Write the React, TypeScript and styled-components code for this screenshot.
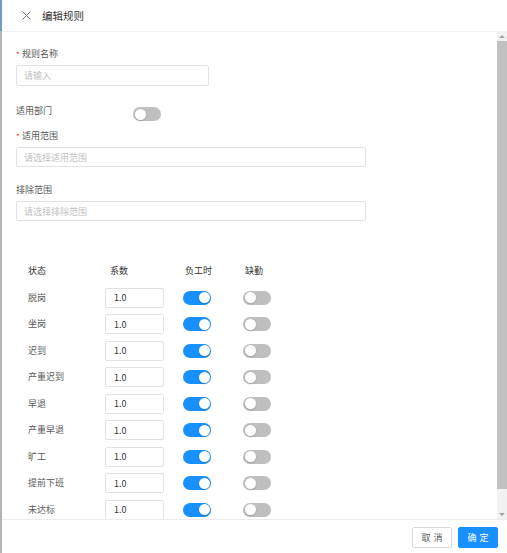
import React from 'react'
import styled, { createGlobalStyle } from 'styled-components';

const GlobalStyle = createGlobalStyle`
  html, body {
    margin: 0;
    padding: 0;
    background: #fff;
  }
  body {
    font-family: "Noto Sans CJK SC", "Noto Sans", sans-serif;
    color: #595959;
  }
  * { box-sizing: border-box; }
`;

const Page = styled.div`
  display: flex;
  width: 507px;
  height: 553px;
  overflow: hidden;
`;

const LeftEdge = styled.div`
  width: 2px;
  flex: none;
  background: linear-gradient(#6f9bc6 0 31px, #b4b4b4 31px);
`;

const Drawer = styled.div`
  flex: 1;
  display: flex;
  flex-direction: column;
  min-width: 0;
`;

const Header = styled.div`
  height: 32px;
  flex: none;
  display: flex;
  align-items: center;
  padding-left: 19px;
  border-bottom: 1px solid #f0f0f0;
`;

const CloseButton = styled.button`
  width: 10px;
  height: 10px;
  padding: 0;
  border: 0;
  background: none;
  display: flex;
  align-items: center;
  justify-content: center;
  margin-right: 11px;
  cursor: pointer;
`;

const Title = styled.div`
  font-size: 10.5px;
  line-height: 14px;
  color: #333;
`;

const BodyRow = styled.div`
  flex: 1;
  min-height: 0;
  display: flex;
`;

const Content = styled.div`
  flex: 1;
  overflow: hidden;
  padding: 16px 0 0 14px;
`;

const ScrollTrack = styled.div`
  width: 10px;
  flex: none;
  display: flex;
  flex-direction: column;
  background: #f1f1f1;
`;

const ScrollArrow = styled.div<{ $down?: boolean }>`
  height: 9px;
  flex: none;
  display: flex;
  align-items: center;
  justify-content: center;

  &::after {
    content: '';
    width: 0;
    height: 0;
    border-left: 3px solid transparent;
    border-right: 3px solid transparent;
    ${p => (p.$down ? 'border-top' : 'border-bottom')}: 3px solid #a3a3a3;
  }
`;

const ScrollThumb = styled.div<{ $size: number }>`
  height: ${p => p.$size}px;
  flex: none;
  background: #c1c1c1;
`;

const ScrollRest = styled.div`
  flex: 1;
`;

const Label = styled.div<{ $required?: boolean; $gap?: number }>`
  font-size: 9px;
  line-height: 12px;
  color: #595959;
  margin-top: ${p => p.$gap ?? 0}px;
  position: relative;
  padding-left: ${p => (p.$required ? 6 : 0)}px;

  &::before {
    content: ${p => (p.$required ? '"*"' : 'none')};
    position: absolute;
    left: 0;
    top: 1px;
    color: #f5222d;
    font-size: 8px;
  }
`;

const TextInput = styled.input<{ $width: number; $height?: number }>`
  display: block;
  width: ${p => p.$width}px;
  height: ${p => p.$height ?? 20}px;
  margin-top: 5px;
  border: 1px solid #e3e3e3;
  border-radius: 2px;
  padding: 0 7px;
  font-family: inherit;
  font-size: 9px;
  color: #333;
  outline: none;

  &::placeholder { color: #bfbfbf; }
`;

const DeptRow = styled.div`
  display: flex;
  align-items: flex-start;
  margin-top: 19px;
`;

const DeptLabel = styled(Label)`
  width: 117px;
`;

const Toggle = styled.button<{ $on?: boolean }>`
  width: 28px;
  height: 14px;
  padding: 0;
  border: 0;
  border-radius: 7px;
  background: ${p => (p.$on ? '#1890ff' : '#bfbfbf')};
  position: relative;
  cursor: pointer;
  flex: none;

  &::after {
    content: '';
    position: absolute;
    top: 1.5px;
    left: ${p => (p.$on ? 15.5 : 1.5)}px;
    width: 11px;
    height: 11px;
    border-radius: 50%;
    background: #fff;
    box-shadow: 0 1px 2px rgba(0, 35, 11, 0.2);
  }
`;

const DeptToggle = styled(Toggle)`
  margin-top: 2px;
`;

const Table = styled.div`
  display: grid;
  grid-template-columns: 77px 78px 60px 40px;
  grid-auto-rows: 26.5px;
  align-items: center;
  margin-top: 37px;
  padding-left: 12px;
`;

const HeadCell = styled.div<{ $indent?: number }>`
  font-size: 9px;
  line-height: 12px;
  color: #333;
  padding-left: ${p => p.$indent ?? 0}px;
`;

const StatusCell = styled.div`
  font-size: 9px;
  line-height: 12px;
  color: #595959;
`;

const CoefInput = styled(TextInput)`
  margin-top: 0;
  padding: 0 8px;
`;

const Footer = styled.div`
  height: 34px;
  flex: none;
  border-top: 1px solid #ececec;
  display: flex;
  justify-content: flex-end;
  align-items: center;
  gap: 6px;
  padding: 0 9px 0 0;
`;

const Button = styled.button<{ $primary?: boolean }>`
  width: 40px;
  height: 21px;
  padding: 0;
  border-radius: 2px;
  border: 1px solid ${p => (p.$primary ? '#1890ff' : '#d9d9d9')};
  background: ${p => (p.$primary ? '#1890ff' : '#fff')};
  color: ${p => (p.$primary ? '#fff' : '#595959')};
  font-family: inherit;
  font-size: 9px;
  letter-spacing: 3px;
  text-indent: 3px;
  cursor: pointer;
  margin-top: 1px;
`;

const statuses = ['脱岗', '坐岗', '迟到', '产重迟到', '早退', '产重早退', '旷工', '提前下班', '未达标'];

export default function App() {
  return (
    <Page>
      <GlobalStyle />
      <LeftEdge />
      <Drawer>
        <Header>
          <CloseButton aria-label="close">
            <svg width="9" height="9" viewBox="0 0 9 9">
              <path d="M0.5 0.5L8.5 8.5M8.5 0.5L0.5 8.5" stroke="#777" strokeWidth="1" />
            </svg>
          </CloseButton>
          <Title>编辑规则</Title>
        </Header>
        <BodyRow>
          <Content>
            <Label $required>规则名称</Label>
            <TextInput $width={193} $height={21} placeholder="请输入" />

            <DeptRow>
              <DeptLabel>适用部门</DeptLabel>
              <DeptToggle />
            </DeptRow>

            <Label $required $gap={9}>适用范围</Label>
            <TextInput $width={350} placeholder="请选择适用范围" />

            <Label $gap={17}>排除范围</Label>
            <TextInput $width={350} placeholder="请选择排除范围" />

            <Table>
              <HeadCell>状态</HeadCell>
              <HeadCell $indent={5}>系数</HeadCell>
              <HeadCell $indent={2}>负工时</HeadCell>
              <HeadCell $indent={2}>缺勤</HeadCell>
              {statuses.map(s => (
                <React.Fragment key={s}>
                  <StatusCell>{s}</StatusCell>
                  <div><CoefInput $width={59} defaultValue="1.0" /></div>
                  <div><Toggle $on /></div>
                  <div><Toggle /></div>
                </React.Fragment>
              ))}
            </Table>
          </Content>
          <ScrollTrack>
            <ScrollArrow />
            <ScrollThumb $size={448} />
            <ScrollRest />
            <ScrollArrow $down />
          </ScrollTrack>
        </BodyRow>
        <Footer>
          <Button>取消</Button>
          <Button $primary>确定</Button>
        </Footer>
      </Drawer>
    </Page>
  )
}
